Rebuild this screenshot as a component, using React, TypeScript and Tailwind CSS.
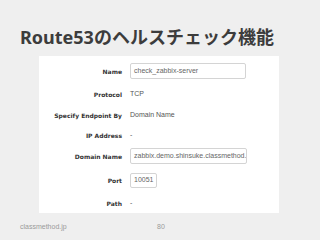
export default function App() {
  const rows: { label: string; h: string; value: React.ReactNode }[] = [
    {
      label: "Name",
      h: "h-[22px]",
      value: (
        <div className="w-[116px] h-[16px] border border-[#d4d4d4] rounded-[2px] bg-white flex items-center px-[3px] text-[#666]">
          check_zabbix-server
        </div>
      ),
    },
    { label: "Protocol", h: "h-[24px]", value: <span className="text-[#555]">TCP</span> },
    { label: "Specify Endpoint By", h: "h-[18px]", value: <span className="text-[#555]">Domain Name</span> },
    { label: "IP Address", h: "h-[22px]", value: <span className="text-[#555]">-</span> },
    {
      label: "Domain Name",
      h: "h-[20px]",
      value: (
        <div className="w-[117px] h-[16px] border border-[#d4d4d4] rounded-[2px] bg-white flex items-center px-[3px] text-[#666] whitespace-nowrap overflow-hidden">
          zabbix.demo.shinsuke.classmethod.
        </div>
      ),
    },
    {
      label: "Port",
      h: "h-[28px]",
      value: (
        <div className="w-[27px] h-[15px] border border-[#d4d4d4] rounded-[2px] bg-white flex items-center px-[3px] text-[#666]">
          10051
        </div>
      ),
    },
    { label: "Path", h: "h-[18px]", value: <span className="text-[#555]">-</span> },
  ];

  return (
    <div className="w-[320px] h-[240px] bg-[#efefef] flex flex-col overflow-hidden">
      <div
        className="mt-[28px] ml-[20px] h-[18px] leading-[18px] text-[18px] font-bold text-[#3c3c3c] whitespace-nowrap"
        style={{ fontFamily: '"Noto Sans", "Noto Sans CJK JP", sans-serif' }}
      >
        Route53のヘルスチェック機能
      </div>
      <div className="mt-[10px] ml-[39px] w-[240px] h-[157px] bg-white pt-[4px] flex flex-col">
        {rows.map((r) => (
          <div key={r.label} className={`${r.h} flex items-center`}>
            <div
              className="w-[83px] text-right font-bold text-[6px] text-[#333] whitespace-nowrap"
              style={{ fontFamily: '"DejaVu Sans", sans-serif' }}
            >
              {r.label}
            </div>
            <div
              className="ml-[8px] text-[7px]"
              style={{ fontFamily: '"Liberation Sans", Arial, sans-serif' }}
            >
              {r.value}
            </div>
          </div>
        ))}
      </div>
      <div
        className="mt-[9px] flex items-center text-[7px] text-[#9a9a9a] h-[10px]"
        style={{ fontFamily: '"Liberation Sans", Arial, sans-serif' }}
      >
        <span className="ml-[20px] w-[137px]">classmethod.jp</span>
        <span>80</span>
      </div>
    </div>
  );
}
